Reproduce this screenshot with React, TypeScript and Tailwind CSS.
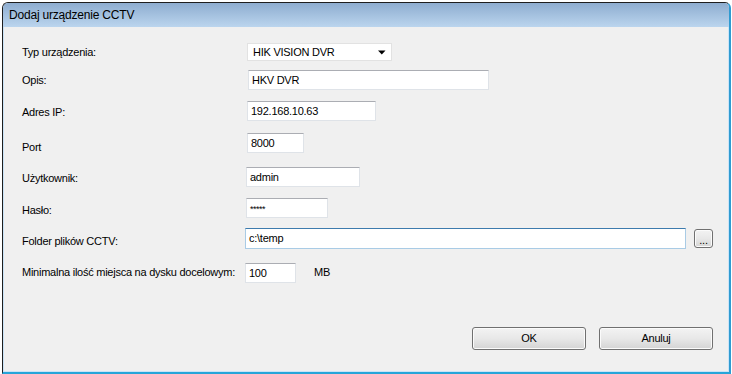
import type { ReactNode } from "react";

function Row({
  label,
  lw,
  pt,
  mt,
  h,
  children,
}: {
  label: string;
  lw: string;
  pt: string;
  mt: string;
  h: string;
  children: ReactNode;
}) {
  return (
    <div className={`flex items-start ${mt} ${h}`}>
      <div className={`shrink-0 whitespace-nowrap leading-[13px] ${lw} ${pt}`}>{label}</div>
      {children}
    </div>
  );
}

function TextBox({ w, value, focused }: { w: string; value: string; focused?: boolean }) {
  const border = focused
    ? "border-[#a9cbe5] border-t-[#3d7bad]"
    : "border-[#dfe3e8] border-t-[#abadb3]";
  return (
    <div className={`h-full bg-white border pl-[3px] flex items-center ${border} ${w}`}>
      <span className="leading-[13px]">{value}</span>
    </div>
  );
}

function Button({ w, h, children }: { w: string; h: string; children: ReactNode }) {
  return (
    <div
      className={`flex items-center justify-center rounded-[3px] border border-[#707070] bg-linear-to-b from-[#f3f3f3] via-[#e8e8e8] to-[#d4d4d4] shadow-[inset_0_0_0_1px_#fbfbfb] ${w} ${h}`}
    >
      {children}
    </div>
  );
}

export default function App() {
  return (
    <div className="w-[732px] h-[374px] bg-white pt-[2px] pl-[2px] overflow-hidden font-['Liberation_Sans',Arial,sans-serif] text-[11px] tracking-[-0.25px] text-black">
      <div className="w-[729px] h-[372px] flex flex-col rounded-t-[6px] border-t border-l border-[#1e1e1e] border-r-2 border-r-[#2f9bd1] border-b-2 border-b-[#26a5d9] overflow-hidden bg-[#f0f0f0]">
        {/* title bar */}
        <div className="h-[24px] shrink-0 flex items-center pl-[6px] bg-linear-to-b from-[#8eadd0] to-[#bbd5ee]">
          <span className="text-[12px] leading-[14px] tracking-[-0.2px]">Dodaj urządzenie CCTV</span>
        </div>

        {/* client area */}
        <div className="flex-1 flex flex-col border-l border-r border-b border-[#c9e3f7] pl-[18px] pr-[15px] pt-[16px]">
          <Row label="Typ urządzenia:" lw="w-[225px]" pt="pt-[3px]" mt="mt-0" h="h-[18px]">
            <div className="w-[145px] h-full bg-white border border-[#e2e2e2] flex items-center justify-between pl-[5px] pr-[5px]">
              <span className="leading-[13px]">HIK VISION DVR</span>
              <svg width="8" height="5" viewBox="0 0 8 5">
                <path d="M0 0.5 L7.5 0.5 L3.75 4.5 Z" fill="#000" />
              </svg>
            </div>
          </Row>
          <Row label="Opis:" lw="w-[225px]" pt="pt-[4px]" mt="mt-[9px]" h="h-[20px]">
            <div className="pl-[1px] h-full">
              <TextBox w="w-[241px]" value="HKV DVR" />
            </div>
          </Row>
          <Row label="Adres IP:" lw="w-[225px]" pt="pt-[5px]" mt="mt-[11px]" h="h-[20px]">
            <TextBox w="w-[129px]" value="192.168.10.63" />
          </Row>
          <Row label="Port" lw="w-[225px]" pt="pt-[8px]" mt="mt-[12px]" h="h-[20px]">
            <TextBox w="w-[57px]" value="8000" />
          </Row>
          <Row label="Użytkownik:" lw="w-[224px]" pt="pt-[5px]" mt="mt-[14px]" h="h-[20px]">
            <TextBox w="w-[114px]" value="admin" />
          </Row>
          <Row label="Hasło:" lw="w-[224px]" pt="pt-[6px]" mt="mt-[11px]" h="h-[20px]">
            <div className="h-full w-[82px] bg-white border border-[#dfe3e8] border-t-[#abadb3] pl-[3px] pt-[1px]">
              <span className="text-[9px] leading-[10px] tracking-[-0.5px]">*****</span>
            </div>
          </Row>
          <Row label="Folder plików CCTV:" lw="w-[223px]" pt="pt-[7px]" mt="mt-[10px]" h="h-[21px]">
            <TextBox w="w-[443px]" value="c:\temp" focused />
            <div className="ml-[8px] mt-[1px]">
              <Button w="w-[19px]" h="h-[19px]">
                <span className="leading-[10px] pt-[3px]">...</span>
              </Button>
            </div>
          </Row>
          <Row
            label="Minimalna ilość miejsca na dysku docelowym:"
            lw="w-[223px]"
            pt="pt-[3px]"
            mt="mt-[14px]"
            h="h-[20px]"
          >
            <TextBox w="w-[51px]" value="100" />
            <span className="ml-[18px] pt-[3px] leading-[13px]">MB</span>
          </Row>

          <div className="mt-[44px] flex justify-end gap-[13px]">
            <Button w="w-[114px]" h="h-[23px]">
              OK
            </Button>
            <Button w="w-[114px]" h="h-[23px]">
              Anuluj
            </Button>
          </div>
        </div>
      </div>
    </div>
  );
}
